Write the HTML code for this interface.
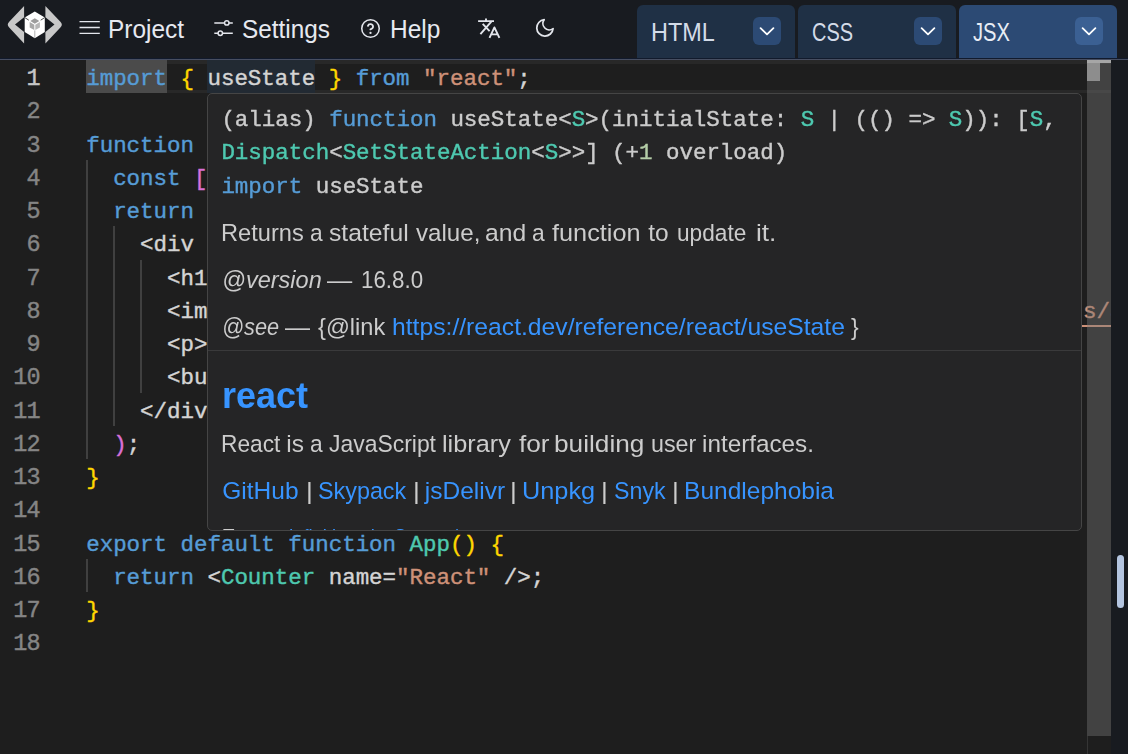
<!DOCTYPE html>
<html lang="en">
<head>
<meta charset="utf-8">
<title>LiveCodes</title>
<style>
*{box-sizing:border-box;margin:0;padding:0}
html,body{width:1128px;height:754px;overflow:hidden;background:#181b20}
body{position:relative;font-family:"Liberation Sans",sans-serif;color:#e3e7ee}
.x{-webkit-text-stroke:0;position:absolute;display:block;height:60px;line-height:60px;white-space:pre;transform-origin:0 50%;font-family:"Liberation Sans",sans-serif;letter-spacing:0;text-decoration:none}
#toolbar{position:absolute;left:0;top:0;width:1128px;height:60px;background:#181b20;color:#e6e9f0}
#tbl1{position:absolute;left:0;top:58px;width:1128px;height:1px;background:#111a2c}
#tbl2{position:absolute;left:0;top:59px;width:1128px;height:1px;background:#474e61}
#toolbar svg{position:absolute;overflow:visible}
.tab{position:absolute;top:5px;height:53px;width:157.5px;border-radius:6px 6px 0 0;background:#1f3045;color:#d3dbe8}
.tab.active{background:#2c4a74;color:#e8edf5}
.tab i{position:absolute;left:116px;top:12px;width:28px;height:28px;border-radius:6px;background:#2c4a74}
.tab.active i{background:#3b6093}
.tab i svg{position:absolute;left:0;top:0}
#editor{-webkit-text-stroke:0.4px;position:absolute;left:0;top:60px;width:1111px;height:694px;background:#1e1e1e;overflow:hidden;font-family:"Liberation Mono",monospace;font-size:22.5px;letter-spacing:-0.032px;color:#d4d4d4}
.ln{font-size:23.5px;letter-spacing:-0.63px;position:absolute;left:0;width:40.1px;text-align:right;color:#858585;height:33.25px;line-height:33.25px;padding-top:2px}
.ln.cur{color:#c6c6c6}
.cl{position:absolute;left:86.2px;height:33.25px;line-height:33.25px;white-space:pre;padding-top:3px}
.k{color:#569cd6}.s{color:#ce9178}.t{color:#4ec9b0}.n{color:#b5cea8}
.b1{color:#ffd700}.b2{color:#da70d6}.b3{color:#179fff}
.u{text-decoration:underline;text-underline-position:under;text-decoration-thickness:1.6px;text-underline-offset:1.1px}
.hl{position:absolute;height:33.25px}
.clb{position:absolute;left:86px;width:1025px;height:3.5px;background:#282828}
.guide{position:absolute;width:1.75px;background:#404040}
#vsb{position:absolute;left:1087px;top:0;width:24px;height:676px;background:rgba(121,121,121,.4)}
#ovc{position:absolute;left:1087px;top:0;width:24px;height:3px;background:#a6a6a6}
#ovb{position:absolute;left:1087px;top:676px;width:1px;height:18px;background:#353535}
#ovm{position:absolute;left:1087px;top:0;width:13px;height:21px;background:rgba(160,160,160,.8)}
#hover{will-change:transform;position:absolute;left:207px;top:33px;width:875px;height:438px;background:#252526;border:1px solid #454545;border-radius:5px;overflow:hidden;color:#cccccc}
#hover .code{position:absolute;left:13.4px;white-space:pre;height:33.25px;line-height:33.25px;padding-top:3px}
#hover .lk{color:#3794ff}
#hover hr{position:absolute;left:0;width:875px;top:256px;border:0;border-top:1px solid #3a3a3b;height:0}
#split{position:absolute;left:1117px;top:555px;width:7px;height:53px;border-radius:4px;background:#b4c5e0}
</style>
</head>
<body>

<div id="toolbar" class="f">
  <svg id="logo" style="left:0;top:0" width="72" height="48" viewBox="0 0 72 48">
    <path d="M24.1 6.1 V17.2 L15 24.6 L24.1 32 V43.4 L9.2 27.5 Q6.3 24.6 9.2 21.7 Z" fill="#c8c8c8"/>
    <path d="M45.4 6.1 V17.2 L54.5 24.6 L45.4 32 V43.4 L60.4 27.5 Q63.3 24.6 60.4 21.7 Z" fill="#c8c8c8"/>
    <path d="M34.8 11.4 L44.8 17.5 V32 L34.8 38.3 L24.7 32 V17.5 Z" fill="#ffffff"/>
    <path d="M34.8 18.3 L39.3 21 L34.8 23.7 L30.3 21 Z" fill="#9c9c9c"/>
    <path d="M29.7 22 L34.3 24.7 V30 L29.7 27.4 Z" fill="#a8a8a8"/>
    <path d="M35.3 24.7 L39.9 22 V27.4 L35.3 30 Z" fill="#b6b6b6"/>
    <path d="M24.7 17.5 L28.8 20.2 M44.8 17.5 L40.7 20.2" stroke="#3a3a3a" stroke-width="0.9" fill="none"/>
    <path d="M34.8 30.4 V38" stroke="#a8a8a8" stroke-width="0.9" fill="none"/>
  </svg>
  <svg style="left:79px;top:20px" width="22" height="16" viewBox="0 0 22 16"><path d="M0.5 1.6H20.8M0.5 7.5H20.8M0.5 13.4H20.8" stroke="#e3e6ec" stroke-width="1.4" fill="none"/></svg>
  <span class="x" style="left:107.99px;top:-1.00px;font-size:25.5px;transform:scaleX(0.9571)">Project</span>
  <svg style="left:213px;top:18px" width="22" height="20" viewBox="0 0 22 20"><g stroke="#e3e6ec" stroke-width="1.5" fill="none"><path d="M1.3 4.9H11.6M16 4.9H19.8M1.3 15.3H5.1M9.5 15.3H19.8"/><circle cx="13.8" cy="4.9" r="2.2"/><circle cx="7.3" cy="15.3" r="2.2"/></g></svg>
  <span class="x" style="left:242.25px;top:-1.00px;font-size:25.5px;transform:scaleX(0.9538)">Settings</span>
  <svg style="left:360px;top:17.5px" width="21" height="21" viewBox="0 0 24 24"><g stroke="#e3e6ec" stroke-width="1.75" fill="none" stroke-linecap="round" stroke-linejoin="round"><circle cx="12" cy="12" r="10"/><path d="M9.09 9a3 3 0 0 1 5.83 1c0 2-3 3-3 3" stroke-width="2.1"/><path d="M12 17h.01" stroke-width="2.6"/></g></svg>
  <span class="x" style="left:389.58px;top:-1.00px;font-size:25.5px;transform:scaleX(0.9600)">Help</span>
  <svg style="left:470px;top:10px" width="40" height="36" viewBox="470 10 40 36"><g stroke="#e3e6ec" stroke-width="1.9" fill="none" stroke-linejoin="round"><path d="M478.1 21.1H494M486 18.4V21M491.3 21.6L480.4 34.1M482.7 23.8L489.6 31.2"/><path d="M489.5 37.8L494.4 27.4L499.4 37.8M491.3 34.4H497.6"/></g></svg>
  <svg style="left:533.9px;top:17.2px" width="21.8" height="21.8" viewBox="0 0 24 24"><path d="M21 12.79A9 9 0 1 1 11.21 3 7 7 0 0 0 21 12.79z" stroke="#e3e6ec" stroke-width="1.9" fill="none" stroke-linejoin="round" stroke-linecap="round"/></svg>
  <div class="tab f" style="left:637px"><span class="x" style="left:14.36px;top:-3.00px;font-size:25.5px;transform:scaleX(0.9194)">HTML</span><i><svg width="28" height="28" viewBox="0 0 28 28"><path d="M7.6 11.2L14 17.4L20.4 11.2" stroke="#fff" stroke-width="1.8" fill="none" stroke-linecap="round" stroke-linejoin="round"/></svg></i></div>
  <div class="tab f" style="left:798px"><span class="x" style="left:13.62px;top:-3.00px;font-size:25.5px;transform:scaleX(0.7824)">CSS</span><i><svg width="28" height="28" viewBox="0 0 28 28"><path d="M7.6 11.2L14 17.4L20.4 11.2" stroke="#fff" stroke-width="1.8" fill="none" stroke-linecap="round" stroke-linejoin="round"/></svg></i></div>
  <div class="tab f active" style="left:959px"><span class="x" style="left:14.21px;top:-3.00px;font-size:25.5px;transform:scaleX(0.7889)">JSX</span><i><svg width="28" height="28" viewBox="0 0 28 28"><path d="M7.6 11.2L14 17.4L20.4 11.2" stroke="#fff" stroke-width="1.8" fill="none" stroke-linecap="round" stroke-linejoin="round"/></svg></i></div>
  <div id="tbl1"></div><div id="tbl2"></div>
</div>

<div id="editor">
<div class="clb" style="top:0"></div><div class="clb" style="top:29.75px"></div>
<div class="hl" style="left:86.2px;top:0;width:80.82px;background:#4b4b4b"></div>
<div class="hl" style="left:207.43px;top:0;width:107.76px;background:#222a33"></div>
<div class="guide" style="left:86.20px;top:99.75px;height:299.25px;background:#404040"></div>
<div class="guide" style="left:113.14px;top:166.25px;height:199.5px;background:#404040"></div>
<div class="guide" style="left:140.08px;top:199.5px;height:133.0px;background:#404040"></div>
<div class="guide" style="left:86.20px;top:498.75px;height:33.25px;background:#404040"></div>
<div class="ln cur" style="top:0.0px">1</div>
<div class="cl" style="top:0.0px"><span class="k">import</span> <span class="b1">{</span> useState <span class="b1">}</span> <span class="k">from</span> <span class="s">"react"</span>;</div>
<div class="ln" style="top:33.25px">2</div>
<div class="ln" style="top:66.5px">3</div>
<div class="cl" style="top:66.5px"><span class="k">function</span> <span class="t">Counter</span><span class="b1">(</span>props<span class="b1">)</span> <span class="b1">{</span></div>
<div class="ln" style="top:99.75px">4</div>
<div class="cl" style="top:99.75px">  <span class="k">const</span> <span class="b2">[</span>count, setCount<span class="b2">]</span> = useState<span class="b2">(</span><span class="n">0</span><span class="b2">)</span>;</div>
<div class="ln" style="top:133.0px">5</div>
<div class="cl" style="top:133.0px">  <span class="k">return</span> <span class="b2">(</span></div>
<div class="ln" style="top:166.25px">6</div>
<div class="cl" style="top:166.25px">    &lt;div className=<span class="s">"container"</span>&gt;</div>
<div class="ln" style="top:199.5px">7</div>
<div class="cl" style="top:199.5px">      &lt;h1&gt;Hello, <span class="b3">{</span>props.name<span class="b3">}</span>!&lt;/h1&gt;</div>
<div class="ln" style="top:232.75px">8</div>
<div class="cl" style="top:232.75px">      &lt;img className=<span class="s">"logo"</span> alt=<span class="s">"logo"</span>  src<span>=</span><span class="s">"<span class="u">https://livecodes.io/livecodes/assets/templates/react.svg</span>"</span> /&gt;</div>
<div class="ln" style="top:266.0px">9</div>
<div class="cl" style="top:266.0px">      &lt;p&gt;You clicked <span class="b3">{</span>count<span class="b3">}</span> times.&lt;/p&gt;</div>
<div class="ln" style="top:299.25px">10</div>
<div class="cl" style="top:299.25px">      &lt;button onClick=<span class="b3">{</span><span class="b1">()</span> =&gt; setCount<span class="b1">(</span>count + <span class="n">1</span><span class="b1">)</span><span class="b3">}</span>&gt;Click me&lt;/button&gt;</div>
<div class="ln" style="top:332.5px">11</div>
<div class="cl" style="top:332.5px">    &lt;/div&gt;</div>
<div class="ln" style="top:365.75px">12</div>
<div class="cl" style="top:365.75px">  <span class="b2">)</span>;</div>
<div class="ln" style="top:399.0px">13</div>
<div class="cl" style="top:399.0px"><span class="b1">}</span></div>
<div class="ln" style="top:432.25px">14</div>
<div class="ln" style="top:465.5px">15</div>
<div class="cl" style="top:465.5px"><span class="k">export</span> <span class="k">default</span> <span class="k">function</span> <span class="t">App</span><span class="b1">()</span> <span class="b1">{</span></div>
<div class="ln" style="top:498.75px">16</div>
<div class="cl" style="top:498.75px">  <span class="k">return</span> &lt;<span class="t">Counter</span> name=<span class="s">"React"</span> /&gt;;</div>
<div class="ln" style="top:532.0px">17</div>
<div class="cl" style="top:532.0px"><span class="b1">}</span></div>
<div class="ln" style="top:565.25px">18</div>
<div style="position:absolute;left:1082px;top:232.75px;width:2.3px;height:28px;background:#1e1e1e"></div>
<div id="ovb"></div><div id="vsb"></div><div id="ovm"></div><div id="ovc"></div>
<div id="hover" class="f"><div class="code" style="top:7px">(alias) <span class="k">function</span> useState&lt;<span class="t">S</span>&gt;(initialState: <span class="t">S</span> | (() =&gt; <span class="t">S</span>)): [<span class="t">S</span>,</div>
<div class="code" style="top:40.25px"><span class="t">Dispatch</span>&lt;<span class="t">SetStateAction</span>&lt;<span class="t">S</span>&gt;&gt;] (+<span class="n">1</span> overload)</div>
<div class="code" style="top:73.5px"><span class="k">import</span> useState</div>
<p><span class="x" style="left:13.37px;top:109.10px;font-size:24.5px;transform:scaleX(0.9639)">Returns</span> <span class="x" style="left:102.32px;top:109.10px;font-size:24.5px;transform:scaleX(0.9300)">a</span> <span class="x" style="left:121.09px;top:109.10px;font-size:24.5px;transform:scaleX(1.0091)">stateful</span> <span class="x" style="left:208.30px;top:109.10px;font-size:24.5px;transform:scaleX(0.9841)">value,</span> <span class="x" style="left:276.79px;top:109.10px;font-size:24.5px;transform:scaleX(1.0079)">and</span> <span class="x" style="left:323.72px;top:109.10px;font-size:24.5px;transform:scaleX(0.9300)">a</span> <span class="x" style="left:344.10px;top:109.10px;font-size:24.5px;transform:scaleX(1.0318)">function</span> <span class="x" style="left:440.30px;top:109.10px;font-size:24.5px;transform:scaleX(1.0000)">to</span> <span class="x" style="left:468.88px;top:109.10px;font-size:24.5px;transform:scaleX(0.9247)">update</span> <span class="x" style="left:547.93px;top:109.10px;font-size:24.5px;transform:scaleX(1.0700)">it.</span></p>
<p><span class="x" style="left:13.88px;top:156.30px;font-size:24.5px;font-style:italic;transform:scaleX(0.9604)">@version</span><span class="x" style="left:119.10px;top:156.30px;font-size:24.5px;transform:scaleX(1.0280)">—</span><span class="x" style="left:152.98px;top:156.30px;font-size:24.5px;transform:scaleX(0.9123)">16.8.0</span></p>
<p><span class="x" style="left:14.03px;top:203.10px;font-size:24.5px;font-style:italic;transform:scaleX(0.8871)">@see</span><span class="x" style="left:77.30px;top:203.10px;font-size:24.5px;transform:scaleX(1.0200)">—</span><span class="x" style="left:110.30px;top:203.10px;font-size:24.5px;transform:scaleX(0.9643)">{@link</span><a class="x lk" style="left:183.78px;top:203.10px;font-size:24.5px;transform:scaleX(1.0078)">https://react.dev/reference/react/useState</a><span class="x" style="left:642.80px;top:203.10px;font-size:24.5px;transform:scaleX(0.9375)">}</span></p>
<hr>
<h2><a class="x lk" style="left:14.14px;top:271.80px;font-size:36.75px;font-weight:bold;transform:scaleX(0.9791)">react</a></h2>
<p><span class="x" style="left:13.45px;top:320.10px;font-size:24.5px;transform:scaleX(0.9274)">React</span> <span class="x" style="left:78.30px;top:320.10px;font-size:24.5px;transform:scaleX(1.0000)">is</span> <span class="x" style="left:102.07px;top:320.10px;font-size:24.5px;transform:scaleX(0.9300)">a</span> <span class="x" style="left:121.16px;top:320.10px;font-size:24.5px;transform:scaleX(0.9354)">JavaScript</span> <span class="x" style="left:234.24px;top:320.10px;font-size:24.5px;transform:scaleX(1.0323)">library</span> <span class="x" style="left:310.57px;top:320.10px;font-size:24.5px;transform:scaleX(1.0700)">for</span> <span class="x" style="left:345.96px;top:320.10px;font-size:24.5px;transform:scaleX(1.0704)">building</span> <span class="x" style="left:443.15px;top:320.10px;font-size:24.5px;transform:scaleX(0.9500)">user</span> <span class="x" style="left:494.12px;top:320.10px;font-size:24.5px;transform:scaleX(0.9908)">interfaces.</span></p>
<p><a class="x lk" style="left:14.30px;top:367.30px;font-size:24.5px;transform:scaleX(1.0000)">GitHub</a><span class="x" style="left:97.59px;top:367.30px;font-size:24.5px;transform:scaleX(1.0700)">|</span><a class="x lk" style="left:110.15px;top:367.30px;font-size:24.5px;transform:scaleX(0.9527)">Skypack</a><span class="x" style="left:204.59px;top:367.30px;font-size:24.5px;transform:scaleX(1.0700)">|</span><a class="x lk" style="left:216.80px;top:367.30px;font-size:24.5px;transform:scaleX(1.0000)">jsDelivr</a><span class="x" style="left:302.09px;top:367.30px;font-size:24.5px;transform:scaleX(1.0700)">|</span><a class="x lk" style="left:314.03px;top:367.30px;font-size:24.5px;transform:scaleX(1.0328)">Unpkg</a><span class="x" style="left:392.89px;top:367.30px;font-size:24.5px;transform:scaleX(1.0700)">|</span><a class="x lk" style="left:405.65px;top:367.30px;font-size:24.5px;transform:scaleX(0.9472)">Snyk</a><span class="x" style="left:463.59px;top:367.30px;font-size:24.5px;transform:scaleX(1.0700)">|</span><a class="x lk" style="left:476.10px;top:367.30px;font-size:24.5px;transform:scaleX(1.0000)">Bundlephobia</a></p>
<p><span class="x" style="left:15.00px;top:414.30px;font-size:24.5px;transform:scaleX(0.7686)">Types:</span> <a class="x lk" style="left:74.93px;top:414.30px;font-size:24.5px;transform:scaleX(0.7500)">definitions in @types/react</a></p></div>
</div>
<div id="split"></div>
</body>
</html>
